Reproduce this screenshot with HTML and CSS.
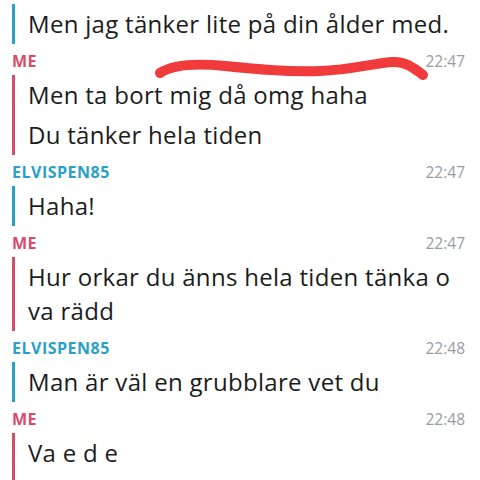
FILE: index.html
```html
<!DOCTYPE html>
<html lang="sv">
<head>
<meta charset="utf-8">
<link rel="stylesheet" href="styles.css">
</head>
<body>
<div class="chat">
  <div class="group blue">
    <p class="msg">Men jag tänker lite på din ålder med.</p>
  </div>
  <div class="head me">
    <span class="name">ME</span><span class="time">22:47</span>
  </div>
  <div class="group red">
    <p class="msg">Men ta bort mig då omg haha</p>
    <p class="msg">Du tänker hela tiden</p>
  </div>
  <div class="head elvis">
    <span class="name">ELVISPEN85</span><span class="time">22:47</span>
  </div>
  <div class="group blue">
    <p class="msg">Haha!</p>
  </div>
  <div class="head me">
    <span class="name">ME</span><span class="time">22:47</span>
  </div>
  <div class="group red">
    <p class="msg">Hur orkar du änns hela tiden tänka o va rädd</p>
  </div>
  <div class="head elvis">
    <span class="name">ELVISPEN85</span><span class="time">22:48</span>
  </div>
  <div class="group blue">
    <p class="msg">Man är väl en grubblare vet du</p>
  </div>
  <div class="head me">
    <span class="name">ME</span><span class="time">22:48</span>
  </div>
  <div class="group red last">
    <p class="msg">Va e d e</p>
  </div>
</div>
<svg class="scribble" width="480" height="480" viewBox="0 0 480 480" aria-hidden="true">
  <path d="M160,73 C172,65 195,63 225,66 C255,69 285,72 320,71 C350,70 370,64 392,62 C405,61 414,68 423,75" fill="none" stroke="#f03a3c" stroke-width="10" stroke-linecap="round" stroke-linejoin="round"/>
</svg>
</body>
</html>
```

FILE: styles.css
```css
html, body {
  margin: 0;
  padding: 0;
  background: #ffffff;
}
body {
  width: 480px;
  height: 480px;
  overflow: hidden;
  position: relative;
  font-family: "Open Sans", "Noto Sans", "DejaVu Sans", sans-serif;
  font-variant-ligatures: none;
}
.chat {
  height: 480px;
  box-sizing: border-box;
  padding: 4px 15px 0 12px;
  display: flex;
  flex-direction: column;
}
.group {
  border-left: 3px solid;
  padding-left: 13px;
  display: flex;
  flex-direction: column;
}
.group.last { flex-grow: 1; }
.group.blue { border-color: #2b9fca; }
.group.red { border-color: #d64d6b; }
.msg {
  margin: 0;
  padding: 3px 0;
  font-size: 24px;
  line-height: 34px;
  letter-spacing: 0.3px;
  color: #1c1c1c;
}
.head {
  height: 31px;
  display: flex;
  align-items: center;
  justify-content: space-between;
  padding-top: 2px;
  box-sizing: border-box;
}
.name {
  font-weight: 700;
  font-size: 16px;
  letter-spacing: 0.5px;
}
.head.me .name { color: #d64d6b; }
.head.elvis .name { color: #2b9fca; }
.time {
  font-size: 15.5px;
  color: #9a9ca2;
}
.scribble {
  position: absolute;
  left: 0;
  top: 0;
  pointer-events: none;
}
```
